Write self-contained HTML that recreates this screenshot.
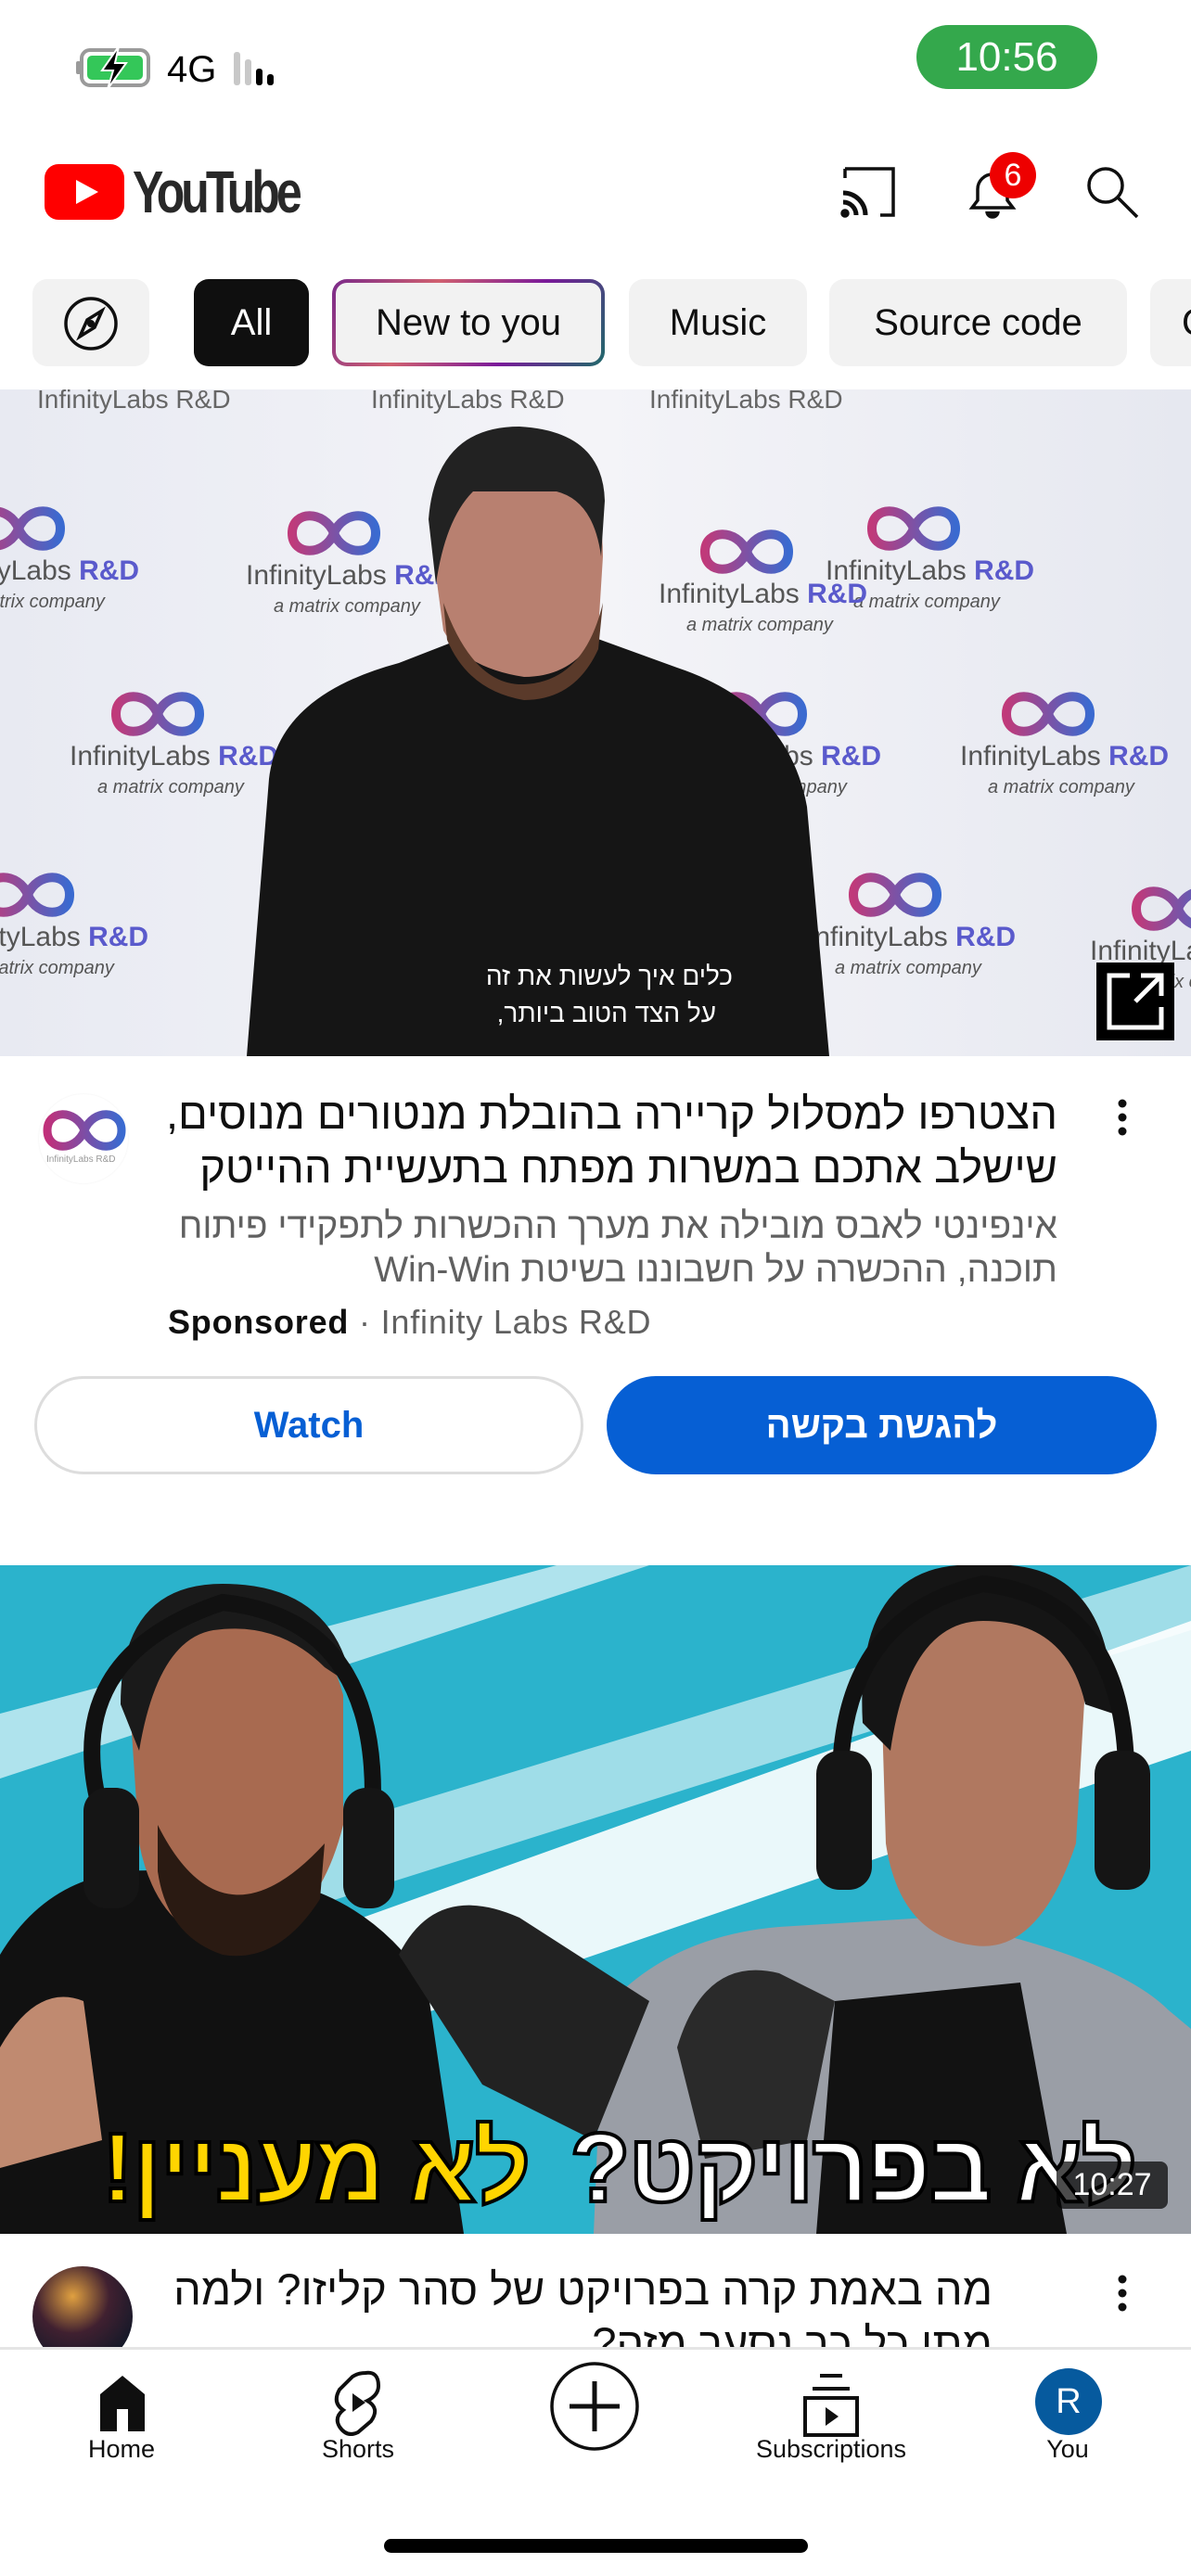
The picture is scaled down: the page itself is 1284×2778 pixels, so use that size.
<!DOCTYPE html>
<html><head><meta charset="utf-8">
<style>
*{margin:0;padding:0;box-sizing:border-box}
body{width:1284px;height:2778px;background:#fff;position:relative;overflow:hidden;font-family:"Liberation Sans","Noto Sans CJK SC",sans-serif;color:#0f0f0f}
.a{position:absolute}
.chip{position:absolute;top:301px;height:94px;border-radius:16px;background:#f2f2f2;font-size:40px;line-height:94px;text-align:center;color:#0f0f0f}
.he{direction:rtl;text-align:right}
.nl{position:absolute;top:2626px;font-size:27px;width:240px;text-align:center;color:#0f0f0f}
.big{position:absolute;top:2280px;font-size:106px;font-weight:bold;direction:rtl;white-space:nowrap;-webkit-text-stroke:4px #000;line-height:116px;letter-spacing:-2px}
</style></head><body>

<!-- status bar -->
<svg class="a" style="left:80px;top:50px" width="240" height="46" viewBox="0 0 240 46">
 <rect x="8" y="4" width="72" height="38" rx="9" fill="none" stroke="#9a9a9a" stroke-width="4"/>
 <rect x="2" y="16" width="5" height="14" rx="2" fill="#9a9a9a"/>
 <rect x="14" y="10" width="60" height="26" rx="5" fill="#34c759"/>
 <path d="M48 0 L30 26 L42 26 L36 46 L56 18 L44 18 Z" fill="#000" stroke="#fff" stroke-width="2"/>
 <text x="100" y="38" font-family="Liberation Sans" font-size="40" fill="#000">4G</text>
 <rect x="172" y="6" width="7" height="36" rx="3" fill="#c8c8c8"/>
 <rect x="184" y="14" width="7" height="28" rx="3" fill="#c8c8c8"/>
 <rect x="196" y="24" width="7" height="18" rx="3" fill="#000"/>
 <rect x="208" y="30" width="7" height="12" rx="3" fill="#000"/>
</svg>
<div class="a" style="left:988px;top:27px;width:195px;height:69px;border-radius:35px;background:#34a84c;color:#fff;font-size:44px;line-height:69px;text-align:center">10:56</div>

<!-- header -->
<svg class="a" style="left:48px;top:177px" width="90" height="62" viewBox="0 0 90 62"><rect width="86" height="60" rx="15" fill="#ff0000"/><path d="M34 17 L58 30 L34 43Z" fill="#fff"/></svg>
<div class="a" style="left:143px;top:170px;font-size:64px;font-weight:bold;letter-spacing:-5px;color:#282828;transform:scaleX(0.78);transform-origin:left">YouTube</div>
<svg class="a" style="left:905px;top:178px" width="64" height="58" viewBox="0 0 64 58" fill="none" stroke="#0f0f0f" stroke-width="3.5">
 <path d="M6 4 H58 V54 H44"/><path d="M6 4 V14"/>
 <path d="M4 30 A24 24 0 0 1 28 54" stroke-width="5"/><path d="M4 40 A14 14 0 0 1 18 54" stroke-width="5"/><circle cx="6" cy="52" r="3" fill="#0f0f0f"/>
</svg>
<svg class="a" style="left:1040px;top:178px" width="60" height="62" viewBox="0 0 60 62" fill="none" stroke="#0f0f0f" stroke-width="3.5">
 <path d="M8 46 H52 L46 38 V26 A16 16 0 0 0 14 26 V38 Z"/><path d="M24 50 A6 6 0 0 0 36 50" fill="#0f0f0f"/>
</svg>
<div class="a" style="left:1067px;top:164px;width:50px;height:50px;border-radius:25px;background:#e00;color:#fff;font-size:34px;line-height:50px;text-align:center">6</div>
<svg class="a" style="left:1168px;top:176px" width="64" height="64" viewBox="0 0 64 64" fill="none" stroke="#0f0f0f" stroke-width="3.5"><circle cx="24" cy="24" r="18"/><path d="M37 37 L58 58"/></svg>

<!-- chips -->
<div class="chip" style="left:35px;width:126px"></div>
<svg class="a" style="left:66px;top:317px" width="64" height="64" viewBox="0 0 64 64"><circle cx="32" cy="32" r="27" fill="none" stroke="#0f0f0f" stroke-width="3.5"/><path d="M44 18 L36 36 L20 46 L28 28Z" fill="none" stroke="#0f0f0f" stroke-width="3.5"/><circle cx="32" cy="32" r="4" fill="#0f0f0f"/></svg>
<div class="chip" style="left:209px;width:124px;background:#0f0f0f;color:#fff">All</div>
<div class="chip" style="left:358px;width:294px;background:linear-gradient(#f2f2f2,#f2f2f2) padding-box,linear-gradient(120deg,#7a2a8a,#d06070,#7a1a9a,#1f6a6a) border-box;border:4px solid transparent;line-height:86px">New to you</div>
<div class="chip" style="left:678px;width:192px">Music</div>
<div class="chip" style="left:894px;width:321px">Source code</div>
<div class="chip" style="left:1240px;width:100px;text-align:left;padding-left:34px">C</div>

<!-- video 1 -->
<div class="a" style="left:0;top:420px;width:1284px;height:719px;background:linear-gradient(90deg,#e8eaf2,#f4f4f8 50%,#e6e8f0);overflow:hidden">
 <svg width="1284" height="719" viewBox="0 0 1284 719">
  <defs><linearGradient id="g" x1="0" x2="1"><stop offset="0" stop-color="#c03a7a"/><stop offset="1" stop-color="#3a6ad0"/></linearGradient>
  <g id="lg"><path d="M0 0 C-10 -25 -45 -25 -45 0 C-45 25 -10 25 0 0 C10 -25 45 -25 45 0 C45 25 10 25 0 0" fill="none" stroke="url(#g)" stroke-width="10"/>
  <text x="-95" y="55" font-size="30" fill="#555" font-family="Liberation Sans">InfinityLabs <tspan fill="#5a5acc" font-weight="bold">R&amp;D</tspan></text>
  <text x="-65" y="85" font-size="20" fill="#555" font-style="italic" font-family="Liberation Sans">a matrix company</text></g></defs>
  <use href="#lg" x="360" y="155"/><use href="#lg" x="985" y="150"/><use href="#lg" x="20" y="150"/>
  <use href="#lg" x="170" y="350"/><use href="#lg" x="1130" y="350"/><use href="#lg" x="805" y="175"/>
  <use href="#lg" x="965" y="545"/><use href="#lg" x="30" y="545"/><use href="#lg" x="1270" y="560"/><use href="#lg" x="820" y="350"/>
  <text x="40" y="20" font-size="28" fill="#666">InfinityLabs R&amp;D</text><text x="400" y="20" font-size="28" fill="#666">InfinityLabs R&amp;D</text><text x="700" y="20" font-size="28" fill="#666">InfinityLabs R&amp;D</text>
  <path d="M266 719 L290 420 Q300 330 430 295 L520 260 L620 260 L730 300 Q850 340 870 450 L894 719Z" fill="#151515"/>
  <path d="M470 200 Q465 100 520 90 L600 85 Q650 100 650 180 L645 260 Q620 310 565 310 Q500 300 478 260Z" fill="#b88070"/>
  <path d="M462 140 Q470 40 560 40 Q650 45 652 120 L648 180 Q640 120 600 110 L510 110 Q480 140 470 210Z" fill="#222"/>
  <path d="M478 230 Q510 320 565 318 Q630 315 650 230 L645 280 Q620 335 565 335 Q505 325 482 270Z" fill="#5a3a2a"/>
  <rect x="1182" y="618" width="84" height="84" fill="#000"/>
  <path d="M1218 632 H1196 V688 H1252 V666 M1230 632 H1252 V654 M1252 632 L1224 660" fill="none" stroke="#fff" stroke-width="5"/>
 </svg>
 <div class="a he" style="left:400px;top:612px;width:390px;font-size:28px;line-height:42px;color:#fff">כלים איך לעשות את זה</div>
 <div class="a he" style="left:400px;top:652px;width:372px;font-size:28px;line-height:42px;color:#fff">על הצד הטוב ביותר,</div>
</div>

<!-- ad info -->
<div class="a" style="left:42px;top:1180px;width:96px;height:96px;border-radius:50%;background:#fff;box-shadow:0 0 2px #eee"></div>
<svg class="a" style="left:46px;top:1195px" width="90" height="60" viewBox="0 0 90 60"><path d="M45 24 C35 0 5 2 5 24 C5 46 35 48 45 24 C55 0 85 2 85 24 C85 46 55 48 45 24" fill="none" stroke="url(#g2)" stroke-width="9"/><defs><linearGradient id="g2"><stop offset="0" stop-color="#c0307a"/><stop offset="1" stop-color="#3a6ad0"/></linearGradient></defs><text x="4" y="58" font-size="10" fill="#999">InfinityLabs R&amp;D</text></svg>
<div class="a he" style="left:140px;top:1172px;width:1000px;font-size:47px;line-height:58px;color:#0f0f0f;white-space:nowrap">הצטרפו למסלול קריירה בהובלת מנטורים מנוסים,<br>שישלב אתכם במשרות מפתח בתעשיית ההייטק</div>
<div class="a he" style="left:140px;top:1299px;width:1000px;font-size:39px;line-height:47px;color:#606060;white-space:nowrap">אינפינטי לאבס מובילה את מערך ההכשרות לתפקידי פיתוח<br>תוכנה, ההכשרה על חשבוננו בשיטת Win-Win</div>
<div class="a" style="left:181px;top:1405px;font-size:36px;color:#606060;letter-spacing:0.8px"><b style="color:#0f0f0f">Sponsored</b> · Infinity Labs R&amp;D</div>
<svg class="a" style="left:1200px;top:1184px" width="20" height="44"><circle cx="10" cy="6" r="4.5" fill="#0f0f0f"/><circle cx="10" cy="21" r="4.5" fill="#0f0f0f"/><circle cx="10" cy="36" r="4.5" fill="#0f0f0f"/></svg>
<div class="a" style="left:37px;top:1484px;width:592px;height:106px;border-radius:53px;border:3px solid #ddd;color:#065fd4;font-size:40px;font-weight:bold;line-height:100px;text-align:center">Watch</div>
<div class="a" style="left:654px;top:1484px;width:593px;height:106px;border-radius:53px;background:#065fd4;color:#fff;font-size:40px;font-weight:bold;line-height:106px;text-align:center;direction:rtl">להגשת בקשה</div>

<!-- video 2 -->
<div class="a" style="left:0;top:1688px;width:1284px;height:721px;background:#2bb3cc;overflow:hidden">
 <svg width="1284" height="721" viewBox="0 0 1284 721">
  <path d="M0 520 L1284 60 L1284 200 L0 640Z" fill="#fff" opacity="0.9"/>
  <path d="M300 300 L1284 0 L1284 70 L300 380Z" fill="#fff" opacity="0.55"/>
  <path d="M0 160 L600 0 L700 0 L0 230Z" fill="#e8f8fb" opacity="0.7"/>
  <path d="M0 721 L0 420 Q60 320 180 330 L300 340 Q400 360 460 450 L500 721Z" fill="#111"/>
  <path d="M140 150 Q130 40 230 30 Q340 30 370 140 L370 280 Q340 400 250 410 Q170 400 150 300Z" fill="#a86a50"/>
  <path d="M130 150 Q130 20 240 20 Q360 20 380 130 L350 110 Q300 60 230 70 Q170 80 150 200Z" fill="#1a1a1a"/>
  <path d="M170 280 Q240 420 350 300 L345 360 Q300 430 240 420 Q180 400 170 330Z" fill="#2a1a12"/>
  <path d="M110 270 Q60 100 240 40 Q420 60 400 290" fill="none" stroke="#111" stroke-width="18"/>
  <rect x="90" y="240" width="60" height="130" rx="25" fill="#151515"/><rect x="370" y="240" width="55" height="130" rx="25" fill="#151515"/>
  <path d="M0 520 Q40 450 90 470 L110 620 L0 650Z" fill="#c08a70"/>
  <path d="M640 721 L650 480 Q720 400 840 390 L1000 380 Q1200 420 1260 480 L1284 500 L1284 721Z" fill="#9a9ea6"/>
  <path d="M880 721 L900 470 L1100 450 L1150 721Z" fill="#121212"/>
  <path d="M950 130 Q950 30 1060 20 Q1160 20 1170 130 L1160 300 Q1120 420 1050 410 Q970 400 955 300Z" fill="#b07860"/>
  <path d="M930 170 Q920 -10 1060 0 Q1200 -10 1200 160 L1170 150 Q1150 60 1060 60 Q980 60 960 200Z" fill="#151515"/>
  <path d="M910 300 Q880 60 1060 20 Q1240 40 1210 300" fill="none" stroke="#111" stroke-width="18"/>
  <rect x="880" y="200" width="60" height="150" rx="25" fill="#151515"/><rect x="1180" y="200" width="60" height="150" rx="25" fill="#151515"/>
  <path d="M430 420 Q470 340 560 380 L700 470 L640 620 L520 560Z" fill="#222"/>
  <path d="M730 520 Q760 420 840 440 L900 470 L870 620 L760 640Z" fill="#2a2a2a"/>
 </svg>
</div>
<div class="big" style="left:560px;width:664px;text-align:right;color:#fff">לא בפרויקט?</div>
<div class="big" style="left:30px;width:540px;text-align:right;color:#ffd500">לא מעניין!</div>
<div class="a" style="left:1139px;top:2331px;width:120px;height:51px;border-radius:8px;background:rgba(0,0,0,0.7);color:#fff;font-size:34px;line-height:51px;text-align:center">10:27</div>

<!-- video 2 info -->
<div class="a" style="left:35px;top:2444px;width:108px;height:108px;border-radius:50%;background:radial-gradient(circle at 40% 30%,#e0a040 0,#402030 40%,#101828 80%)"></div>
<div class="a he" style="left:140px;top:2440px;width:930px;font-size:47px;line-height:58px;white-space:nowrap">מה באמת קרה בפרויקט של סהר קליזו? ולמה<br>מתן כל כך נסער מזה?</div>
<svg class="a" style="left:1200px;top:2452px" width="20" height="44"><circle cx="10" cy="6" r="4.5" fill="#0f0f0f"/><circle cx="10" cy="21" r="4.5" fill="#0f0f0f"/><circle cx="10" cy="36" r="4.5" fill="#0f0f0f"/></svg>

<!-- bottom nav -->
<div class="a" style="left:0;top:2531px;width:1284px;height:247px;background:#fff;border-top:3px solid #e5e5e5"></div>
<svg class="a" style="left:106px;top:2560px" width="52" height="64" viewBox="0 0 52 64"><path d="M2 22 L26 2 L50 22 V62 H32 V38 H20 V62 H2Z" fill="#0f0f0f"/></svg>
<svg class="a" style="left:356px;top:2555px" width="60" height="72" viewBox="0 0 60 72"><path d="M38 4 Q52 2 52 18 Q52 28 40 34 Q54 42 44 56 L30 68 Q18 74 10 62 Q4 52 14 44 Q2 36 10 22 L24 8 Q30 4 38 4Z" fill="none" stroke="#0f0f0f" stroke-width="4"/><path d="M24 26 L38 36 L24 46Z" fill="#0f0f0f"/></svg>
<svg class="a" style="left:592px;top:2546px" width="98" height="98" viewBox="0 0 98 98"><circle cx="49" cy="49" r="46" fill="none" stroke="#0f0f0f" stroke-width="3.5"/><path d="M49 22 V76 M22 49 H76" stroke="#0f0f0f" stroke-width="5"/></svg>
<svg class="a" style="left:866px;top:2558px" width="60" height="72" viewBox="0 0 60 72"><path d="M18 4 H42 M10 18 H50" stroke="#0f0f0f" stroke-width="4"/><rect x="2" y="28" width="56" height="40" fill="none" stroke="#0f0f0f" stroke-width="4"/><path d="M24 38 L38 48 L24 58Z" fill="#0f0f0f"/></svg>
<div class="a" style="left:1116px;top:2554px;width:72px;height:72px;border-radius:50%;background:#065a9e;color:#fff;font-size:38px;line-height:72px;text-align:center">R</div>
<div class="nl" style="left:11px">Home</div>
<div class="nl" style="left:266px">Shorts</div>
<div class="nl" style="left:776px">Subscriptions</div>
<div class="nl" style="left:1031px">You</div>
<div class="a" style="left:414px;top:2738px;width:457px;height:15px;border-radius:8px;background:#000"></div>
</body></html>
